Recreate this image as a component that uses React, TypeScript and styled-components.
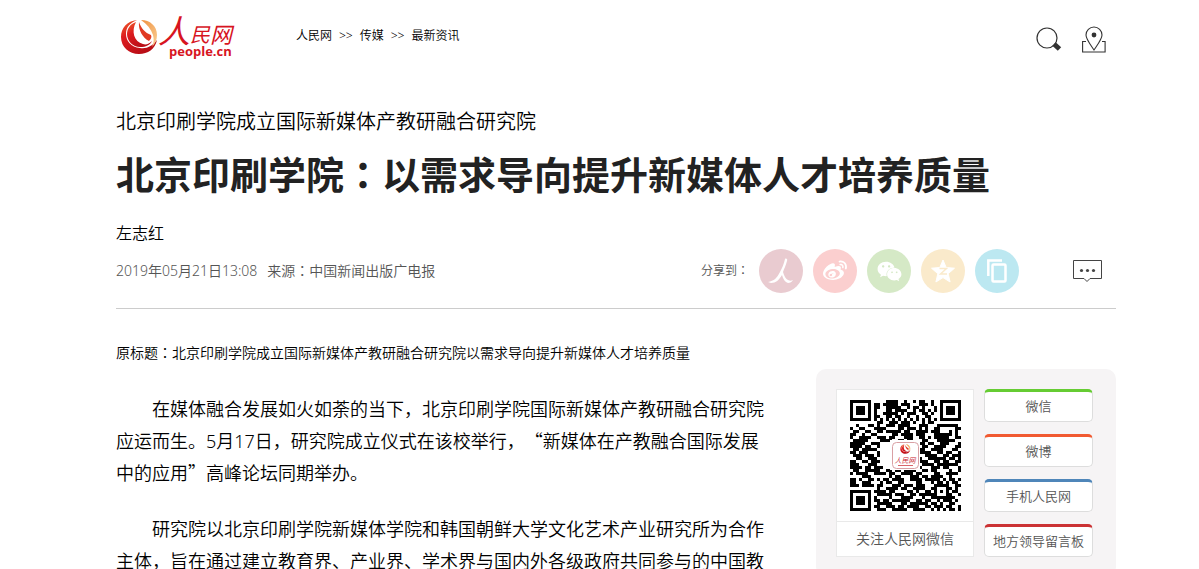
import React from "react";
import styled, { createGlobalStyle } from "styled-components";
import { FaWeibo, FaWeixin } from "react-icons/fa";

const GlobalStyle = createGlobalStyle`
  body {
    margin: 0;
    background: #fff;
    color: #000;
    font-family: "Noto Sans", "Noto Sans CJK SC", sans-serif;
    font-weight: 350;
    text-spacing-trim: space-all;
  }
  *, *::before, *::after { box-sizing: border-box; }
  a { color: inherit; text-decoration: none; }
  h1, h2, p { margin: 0; padding: 0; font-weight: inherit; }
  svg { display: block; overflow: visible; }
`;

const Page = styled.div`
  padding: 0 83px 0 116px;
`;

const Header = styled.header`
  display: flex;
  align-items: flex-start;
  padding: 12px 8px 0 4px;
  height: 107px;
`;

const Crumbs = styled.nav`
  display: flex;
  gap: 7px;
  margin: 14px auto 0 60px;
  font-size: 12px;
  line-height: 20px;
  color: #000;
`;

const Tools = styled.div`
  display: flex;
  gap: 20px;
  padding: 14px 2px 0 0;
`;

const IconButton = styled.button`
  display: block;
  padding: 0;
  border: 0;
  background: none;
  cursor: pointer;
`;

const Kicker = styled.h2`
  font-size: 20px;
  line-height: 30px;
`;

const Title = styled.h1`
  margin-top: 13px;
  font-size: 38px;
  line-height: 48px;
  font-weight: 700;
  color: #222;
`;

const CenteredMark = styled.span`
  font-family: "Noto Sans CJK TC", sans-serif;
  line-height: 1;
`;

const Author = styled.p`
  margin-top: 23px;
  font-size: 16px;
  line-height: 24px;
`;

const Meta = styled.div`
  display: flex;
  align-items: center;
  margin-top: 4px;
  padding: 0 14px 15px 0;
  border-bottom: 1px solid #ccc;
  color: #555;
`;

const Source = styled.p`
  display: flex;
  gap: 10px;
  margin-right: auto;
  font-size: 14px;
  line-height: 20px;
`;

const ShareLabel = styled.span`
  margin-right: 10px;
  font-size: 12px;
  line-height: 20px;
`;

const ShareList = styled.div`
  display: flex;
  gap: 10px;
  margin-right: 54px;
`;

const ShareLink = styled.a<{ $tone: string }>`
  display: flex;
  align-items: center;
  justify-content: center;
  width: 44px;
  height: 44px;
  border-radius: 50%;
  background: ${(p) => p.$tone};
  color: #fff;
`;

const Main = styled.main`
  display: flex;
  align-items: flex-start;
  justify-content: space-between;
  gap: 50px;
`;

const Article = styled.article`
  flex: 1;
  padding-top: 28px;
`;

const OriginalTitle = styled.p`
  font-size: 14px;
  line-height: 32px;
  color: #000;
  white-space: nowrap;
`;

const Paragraph = styled.p`
  margin-top: 24px;
  font-size: 18px;
  line-height: 32px;
  text-indent: 2em;
`;

const WideMark = styled.span`
  font-family: "Noto Sans CJK SC", sans-serif;
  line-height: 1;
`;

const Sidebar = styled.aside`
  display: flex;
  gap: 10px;
  flex: 0 0 300px;
  margin-top: 60px;
  padding: 20px;
  border-radius: 10px;
  background: #f6f4f5;
`;

const QrCard = styled.figure`
  width: 138px;
  margin: 0;
  border: 1px solid #e9e9e9;
  background: #fff;
`;

const QrBox = styled.div`
  padding: 10px 12px 10px 13px;
`;

const QrCaption = styled.figcaption`
  border-top: 1px solid #e9e9e9;
  font-size: 14px;
  line-height: 34px;
  text-align: center;
  color: #555;
`;

const Channels = styled.div`
  display: flex;
  flex-direction: column;
  gap: 12px;
`;

const ChannelLink = styled.a<{ $accent: string }>`
  width: 109px;
  height: 33px;
  border: 1px solid #ddd;
  border-top: 3px solid ${(p) => p.$accent};
  border-radius: 5px;
  background: #fff;
  font-size: 13px;
  line-height: 29px;
  text-align: center;
  white-space: nowrap;
  color: #555;
`;

const Globe = () => (
  <>
    <defs>
      <linearGradient id="globe" x1="0" y1="0" x2="0.6" y2="1">
        <stop offset="0" stopColor="#f0642c" />
        <stop offset=".4" stopColor="#dd1c1f" />
        <stop offset="1" stopColor="#b80d16" />
      </linearGradient>
      <linearGradient id="petal" x1="0" y1="0" x2="1" y2="1">
        <stop offset="0" stopColor="#f0913f" />
        <stop offset="1" stopColor="#f9cf96" />
      </linearGradient>
    </defs>
    <path d="M17 8C7 9 1 16 1 25c0 10 8 17 18 17 9 0 16-5 18-14-5 6-10 9-17 8C11 35 6 29 6 22 6 15 10 11 17 8z" fill="url(#globe)" />
    <path d="M16 10C10 12 7 17 7 22c0 7 6 13 13 13 6 0 10-2 12-6-3 3-6 4-9 3-9-2-12-13-7-22z" fill="url(#globe)" />
    <path d="M18 9c-5 8-3 18 4 22 3 1 6 1 8-1-7-3-12-11-12-21z" fill="#fff" />
    <path d="M19 10c-1 8 4 16 10 19 2-2 3-4 2-6-6-2-10-7-12-13z" fill="#e03a22" />
    <path d="M21 8c9 0 16 6 16 15 0 5-2 9-5 12 2-4 2-8 1-12-2-6-6-11-12-15z" fill="url(#petal)" />
  </>
);

const Logo = () => (
  <svg width="116" height="48" viewBox="0 0 116 48" role="img" aria-label="人民网 people.cn">
    <Globe />
    <g fill="#d7151f" fontFamily="'Noto Sans CJK SC', sans-serif" fontStyle="italic" fontWeight="400">
      <text x="38" y="31" fontSize="32">人</text>
      <text x="70" y="30" fontSize="20">民</text>
      <text x="90" y="31" fontSize="22">网</text>
      <text x="49" y="44" fontSize="13" fontStyle="normal" fontWeight="700" fontFamily="'Open Sans', sans-serif">people.cn</text>
    </g>
  </svg>
);

const SearchIcon = () => (
  <svg width="26" height="26" viewBox="0 0 26 26" fill="none" stroke="#333">
    <circle cx="11" cy="11" r="10" strokeWidth="1.2" />
    <path d="M18 17l5.500 5" strokeWidth="5" />
  </svg>
);

const PinIcon = () => (
  <svg width="24" height="28" viewBox="0 0 24 28" fill="none" stroke="#333" strokeWidth="1.1">
    <path d="M12 24C8 18 4 13 4 9a8 8 0 0 1 16 0c0 4-4 9-8 15z" />
    <circle cx="12" cy="9" r="2.4" fill="#333" stroke="none" />
    <path d="M4 15.500H.6v10.500h22.500v-10.500H20" />
  </svg>
);

const CommentIcon = () => (
  <svg width="29" height="24" viewBox="0 0 29 24" fill="none" stroke="#444">
    <path d="M.5 1.500h28v18H17l-3 3-3-3H.5z" />
    <g fill="#444" stroke="none">
      <circle cx="8.500" cy="11.500" r="1.600" />
      <circle cx="14.500" cy="11.500" r="1.600" />
      <circle cx="20.500" cy="11.500" r="1.600" />
    </g>
  </svg>
);

const RenIcon = () => (
  <svg width="26" height="26" viewBox="0 0 26 26" fill="#fff">
    <path d="M17 1c1-1 3 0 2 2-1 4-3 8-4 11 1 4 3 7 5 8 2 1 3 1 5 0-1 2-3 3-5 3-3-1-5-4-6-8-3 5-6 8-11 8l-3-1c6-1 9-4 12-10 2-4 4-8 5-13z" />
  </svg>
);

const QzoneIcon = () => (
  <svg width="26" height="26" viewBox="0 0 26 26">
    <path d="M13 2l3.200 7.500 8.300.7-6.300 5.500 1.900 8.300L13 19.600 5.900 24l1.900-8.300-6.300-5.500 8.300-.7z" fill="#fff" stroke="#fff" strokeLinejoin="round" />
    <path d="M9.500 10.500h7l-6 5.500h6.500" fill="none" stroke="#faeacb" strokeWidth="1.500" />
  </svg>
);

const CopyIcon = () => (
  <svg width="20" height="24" viewBox="0 0 20 24" fill="none" stroke="#fff" strokeWidth="2.500">
    <path d="M1.300 17V1.500H15" />
    <rect x="5.500" y="5.500" width="13" height="17" rx="1" />
  </svg>
);

const qrRows = [
  "1111111000001111001001011001001111111",
  "1000001011011111011100011101001000001",
  "1011101011001111100101101000101011101",
  "1011101010001101111001011010101011101",
  "1011101010011111010111001101001011101",
  "1000001011001101100100100110001000001",
  "1111111010101010101010101010101111111",
  "0000000001100111011101001011000000000",
  "0010001101001110111100011100011111110",
  "1001100011110000110111010100110000011",
  "0110011001101111101100111101110001010",
  "1100100110000011011110111000111111010",
  "1001111001110110001110011010111110011",
  "0111110000111100110110001100011111100",
  "1111100111000000000000011011001110001",
  "1111011001000000000000101100111100011",
  "0110111110000000000000011001111000110",
  "1101110001000000000000011110011011001",
  "0111011101000000000000100111100110111",
  "0011001110000000000000110011111101101",
  "1100110111000000000000011100110110011",
  "1110001110000000000000101111011111110",
  "1111011011100000000001010001110110001",
  "0110011111001101101111001101100001001",
  "1011110011110110011110110000110011110",
  "0000111000000101100011101101111001000",
  "1101001101011011110011110111110101101",
  "1100111000101100110000110001011010110",
  "1110111101100011101110111000111110011",
  "0000000001001111011001111001100011010",
  "1111111011110110000110100110101010110",
  "1000001001111101110011011111100011001",
  "1011101010000100011110001001111111100",
  "1011101011011011111100110110010111010",
  "1011101001111100011011111101101001100",
  "1000001011001110110111100110111011001",
  "1111111001110011111001111001010101101",
];

const qrPath = qrRows
  .map((row, y) => [...row].map((c, x) => (c === "1" ? `M${x} ${y}h1v1h-1z` : "")).join(""))
  .join("");

const QrCode = () => (
  <svg width="111" height="111" viewBox="0 0 111 111" role="img" aria-label="人民网微信">
    <path d={qrPath} transform="scale(3)" shapeRendering="crispEdges" />
    <rect x="40" y="40" width="30" height="30" fill="#fff" />
    <rect x="42.500" y="42.500" width="26" height="26" rx="4" fill="#fff" stroke="#d9a0a4" />
    <g transform="translate(50 42) scale(.28)">
      <Globe />
    </g>
    <text x="55" y="63" textAnchor="middle" fontSize="7" fontStyle="italic" fill="#c8202a" fontFamily="'Noto Sans CJK SC', sans-serif">人民网</text>
    <path d="M48 65.500h15" stroke="#d9666c" />
  </svg>
);

const shares = [
  { name: "人民网", tone: "#e9cbd0", icon: <RenIcon /> },
  { name: "微博", tone: "#fbcfcf", icon: <FaWeibo size={24} /> },
  { name: "微信", tone: "#d5e9c6", icon: <FaWeixin size={25} /> },
  { name: "QQ空间", tone: "#faeacb", icon: <QzoneIcon /> },
  { name: "复制链接", tone: "#bce8f1", icon: <CopyIcon /> },
];

const channels = [
  { label: "微信", accent: "#66cc33" },
  { label: "微博", accent: "#f15a31" },
  { label: "手机人民网", accent: "#4f86b9" },
  { label: "地方领导留言板", accent: "#cb3234" },
];

export default function App() {
  return (
    <>
      <GlobalStyle />
      <Page>
        <Header>
          <a href="#home"><Logo /></a>
          <Crumbs>
            <a href="#home">人民网</a>
            <span>&gt;&gt;</span>
            <a href="#media">传媒</a>
            <span>&gt;&gt;</span>
            <a href="#news">最新资讯</a>
          </Crumbs>
          <Tools>
            <IconButton aria-label="搜索"><SearchIcon /></IconButton>
            <IconButton aria-label="地方"><PinIcon /></IconButton>
          </Tools>
        </Header>
        <Kicker>北京印刷学院成立国际新媒体产教研融合研究院</Kicker>
        <Title>北京印刷学院<CenteredMark>：</CenteredMark>以需求导向提升新媒体人才培养质量</Title>
        <Author>左志红</Author>
        <Meta>
          <Source>
            <span>2019年05月21日13:08</span>
            <span>来源<CenteredMark>：</CenteredMark><a href="#source">中国新闻出版广电报</a></span>
          </Source>
          <ShareLabel>分享到<CenteredMark>：</CenteredMark></ShareLabel>
          <ShareList>
            {shares.map((s) => (
              <ShareLink key={s.name} href="#share" aria-label={s.name} $tone={s.tone}>{s.icon}</ShareLink>
            ))}
          </ShareList>
          <IconButton aria-label="评论"><CommentIcon /></IconButton>
        </Meta>
        <Main>
          <Article>
            <OriginalTitle>
              原标题<CenteredMark>：</CenteredMark>北京印刷学院成立国际新媒体产教研融合研究院以需求导向提升新媒体人才培养质量
            </OriginalTitle>
            <Paragraph>
              在媒体融合发展如火如荼的当下，北京印刷学院国际新媒体产教研融合研究院应运而生。5月17日，研究院成立仪式在该校举行，<WideMark>“</WideMark>新媒体在产教融合国际发展中的应用<WideMark>”</WideMark>高峰论坛同期举办。
            </Paragraph>
            <Paragraph>
              研究院以北京印刷学院新媒体学院和韩国朝鲜大学文化艺术产业研究所为合作主体，旨在通过建立教育界、产业界、学术界与国内外各级政府共同参与的中国教
            </Paragraph>
          </Article>
          <Sidebar>
            <QrCard>
              <QrBox><QrCode /></QrBox>
              <QrCaption>关注人民网微信</QrCaption>
            </QrCard>
            <Channels>
              {channels.map((c) => (
                <ChannelLink key={c.label} href="#channel" $accent={c.accent}>{c.label}</ChannelLink>
              ))}
            </Channels>
          </Sidebar>
        </Main>
      </Page>
    </>
  );
}
